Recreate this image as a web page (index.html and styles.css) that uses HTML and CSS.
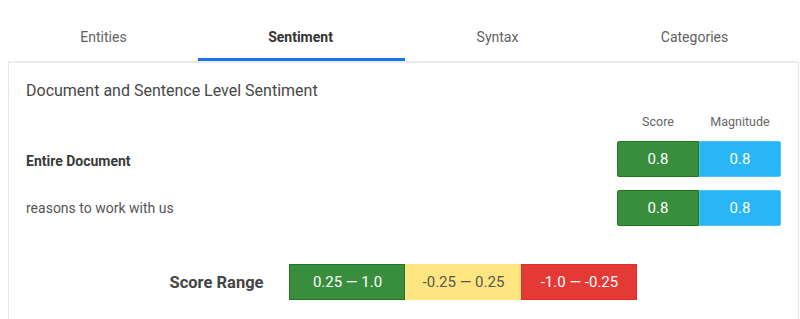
FILE: index.html
```html
<!DOCTYPE html>
<html lang="en">
<head>
    <meta charset="UTF-8">
    <meta name="viewport" content="width=device-width, initial-scale=1.0">
    <title>Sentiment</title>
    <link rel="stylesheet" href="styles.css">
</head>
<body>
    <!-- Abas -->
    <div class="tabs">
        <div class="tab">Entities</div>
        <div class="tab active">Sentiment</div>
        <div class="tab">Syntax</div>
        <div class="tab">Categories</div>
    </div>

    <div class="card">
        <h2 class="title">Document and Sentence Level Sentiment</h2>

        <div class="head-row">
            <span class="col-head">Score</span>
            <span class="col-head">Magnitude</span>
        </div>

        <div class="row">
            <span class="row-label strong">Entire Document</span>
            <div class="values">
                <span class="box green">0.8</span>
                <span class="box blue">0.8</span>
            </div>
        </div>

        <div class="row">
            <span class="row-label">reasons to work with us</span>
            <div class="values">
                <span class="box green">0.8</span>
                <span class="box blue">0.8</span>
            </div>
        </div>

        <!-- Legenda -->
        <div class="range">
            <span class="range-label">Score Range</span>
            <div class="range-boxes">
                <span class="box wide green">0.25 — 1.0</span>
                <span class="box wide yellow">-0.25 — 0.25</span>
                <span class="box wide red">-1.0 — -0.25</span>
            </div>
        </div>
    </div>
</body>
</html>
```

FILE: styles.css
```css
body {
    font-family: Roboto, "Liberation Sans", Arial, sans-serif;
    margin: 0;
    padding: 0;
    background: #fff;
    color: #444;
}

.tabs {
    display: flex;
    margin: 0 4px 0 5px;
}

.tab {
    position: relative;
    flex: 0 0 197px;
    height: 61px;
    box-sizing: border-box;
    padding-top: 27px;
    line-height: 20px;
    text-align: center;
    font-size: 14px;
    font-weight: 400;
    color: #5f5f5f;
}

.tab.active {
    color: #333;
    font-weight: 700;
}

.tab.active::after {
    content: "";
    position: absolute;
    left: -4px;
    right: -6px;
    bottom: 0;
    height: 3px;
    background: #1a73e8;
}

.card {
    margin: 0 1px 0 8px;
    border-top: 2px solid #ececec;
    border-left: 1px solid #e4e4e4;
    border-right: 1px solid #e4e4e4;
    padding: 18px 17px 30px 17px;
}

.title {
    margin: 0;
    font-size: 16px;
    font-weight: 400;
    line-height: 20px;
    color: #474747;
}

.head-row {
    display: flex;
    justify-content: flex-end;
    margin-top: 13px;
}

.col-head {
    width: 82px;
    text-align: center;
    font-size: 12.5px;
    line-height: 16px;
    color: #666;
}

.row {
    display: flex;
    justify-content: space-between;
    align-items: center;
    margin-top: 11px;
}

.row + .row {
    margin-top: 13px;
}

.row-label {
    font-size: 14px;
    color: #555;
}

.row-label.strong {
    font-size: 14px;
    font-weight: 700;
    color: #3a3a3a;
    padding-top: 4px;
}

.values {
    display: flex;
}

.box {
    display: flex;
    align-items: center;
    justify-content: center;
    width: 82px;
    height: 36px;
    box-sizing: border-box;
    font-size: 15px;
    color: #fff;
    border: 1px solid transparent;
}

.green {
    background: #388e3c;
    border-color: #1f7a1f;
}

.blue {
    background: #29b6f6;
    border-color: #4fc3f7;
}

.yellow {
    background: #ffe57f;
    border-color: #ffe57f;
    color: #555;
}

.red {
    background: #e53935;
    border-color: #e0302c;
}

.values .green {
    border-radius: 2px 0 0 2px;
}

.values .blue {
    border-radius: 0 2px 2px 0;
}

.range {
    display: flex;
    align-items: center;
    justify-content: center;
    gap: 26px;
    margin-top: 38px;
}

.range-label {
    font-size: 16.5px;
    font-weight: 700;
    color: #444;
}

.range-boxes {
    display: flex;
}

.box.wide {
    width: 116px;
}
```
